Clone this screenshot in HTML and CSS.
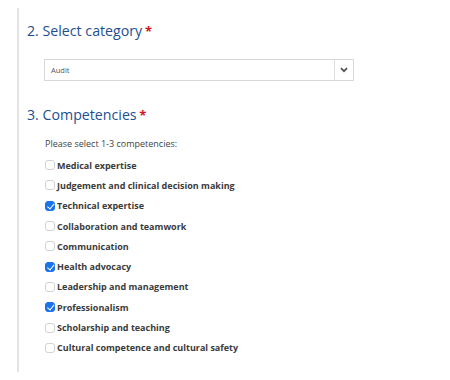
FILE: index.html
```html
<!DOCTYPE html>
<html lang="en">
<head>
    <meta charset="UTF-8">
    <title>Competencies</title>
    <link rel="stylesheet" href="styles.css">
</head>
<body>
    <div class="panel">
        <h2 class="step-title">2. Select category <span class="req">*</span></h2>
        <div class="select-box">
            <span class="select-value">Audit</span>
            <span class="select-arrow">
                <svg width="8" height="6" viewBox="0 0 8 6"><path d="M1 1.2 L4 4.2 L7 1.2" fill="none" stroke="#555" stroke-width="1.8"/></svg>
            </span>
        </div>

        <h2 class="step-title second">3. Competencies <span class="req">*</span></h2>
        <p class="hint">Please select 1-3 competencies:</p>
        <ul class="check-list">
            <li><span class="box"></span>Medical expertise</li>
            <li><span class="box"></span>Judgement and clinical decision making</li>
            <li><span class="box checked"></span>Technical expertise</li>
            <li><span class="box"></span>Collaboration and teamwork</li>
            <li><span class="box"></span>Communication</li>
            <li><span class="box checked"></span>Health advocacy</li>
            <li><span class="box"></span>Leadership and management</li>
            <li><span class="box checked"></span>Professionalism</li>
            <li><span class="box"></span>Scholarship and teaching</li>
            <li><span class="box"></span>Cultural competence and cultural safety</li>
        </ul>
    </div>
</body>
</html>
```

FILE: styles.css
```css
body {
    margin: 0;
    background-color: #ffffff;
    font-family: 'Open Sans', sans-serif;
}

.panel {
    margin: 8px 0 0 17px;
    height: 364px;
    border-left: 2px solid #e4e4e4;
    padding-left: 8px;
    box-sizing: border-box;
}

.step-title {
    margin: 0;
    padding-top: 12px;
    font-size: 14.2px;
    font-weight: 400;
    line-height: 22px;
    color: #1d4f8f;
}

.step-title.second {
    padding-top: 23px;
}

.req {
    color: #d9121b;
    font-weight: 700;
    font-size: 13px;
    margin-left: -1px;
}

/* Category dropdown */
.select-box {
    display: flex;
    align-items: stretch;
    margin: 17px 0 0 17px;
    width: 310px;
    height: 22px;
    border: 1px solid #d8d8d8;
    box-sizing: border-box;
}

.select-value {
    flex: 1;
    display: flex;
    align-items: center;
    padding-left: 6px;
    font-size: 7.5px;
    color: #555;
}

.select-arrow {
    width: 18px;
    border-left: 1px solid #e0e0e0;
    display: flex;
    align-items: center;
    justify-content: center;
}

.hint {
    margin: 11px 0 0 18px;
    font-size: 9px;
    color: #444;
}

.check-list {
    list-style: none;
    margin: 5px 0 0 18px;
    padding: 0;
}

.check-list li {
    display: flex;
    align-items: center;
    height: 20.3px;
    font-size: 9px;
    font-weight: 700;
    color: #3b3b3b;
}

.box {
    width: 10px;
    height: 10px;
    border: 1px solid #d2d2d2;
    border-radius: 3px;
    box-sizing: border-box;
    margin-right: 2px;
    position: relative;
}

.box.checked {
    background-color: #1a73e8;
    border-color: #1a73e8;
}

.box.checked::after {
    content: '';
    position: absolute;
    left: 3px;
    top: 0px;
    width: 2.5px;
    height: 5.5px;
    border: solid #fff;
    border-width: 0 1.5px 1.5px 0;
    transform: rotate(40deg);
}
```
